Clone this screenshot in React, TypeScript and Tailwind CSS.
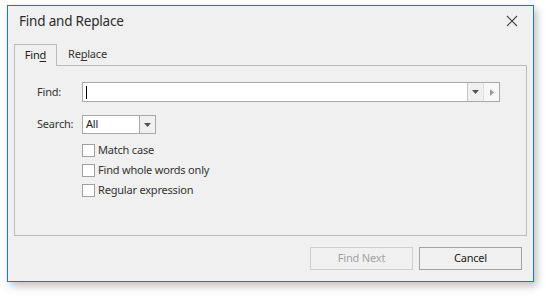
import React from "react";

const font = { fontFamily: '"Segoe UI", "Noto Sans", "Liberation Sans", sans-serif' };

function CheckRow({ label }: { label: string }) {
  return (
    <div className="flex items-center h-[20px]">
      <div className="w-[13px] h-[13px] border border-[#a0a0a0] bg-white mr-[3px]"></div>
      <span className="text-[11px] tracking-[-0.2px] text-[#333]">{label}</span>
    </div>
  );
}

export default function App() {
  return (
    <div className="w-[546px] h-[297px] bg-white pl-[7px] pt-[5px]" style={font}>
      <div className="w-[527px] h-[277px] border border-[#1a78cc] bg-[#f0f0f0] shadow-[3px_4px_8px_rgba(0,0,0,0.25)] flex flex-col">
        {/* title bar */}
        <div className="h-[29px] flex items-center justify-between pl-[11px] pr-[15px]">
          <span className="text-[13.5px] tracking-[-0.2px] text-[#2b2b2b] mt-[1px]">Find and Replace</span>
          <svg width="12" height="12" viewBox="0 0 12 12" className="mt-[1px]">
            <path d="M1 1L11 11M11 1L1 11" stroke="#444" strokeWidth="1.1" />
          </svg>
        </div>

        {/* tabs */}
        <div className="mt-[9px] mx-[6px] flex flex-col">
          <div className="flex h-[21px]">
            <div className="w-[43px] h-[22px] border border-b-0 border-[#bcbcbc] bg-[#f0f0f0] flex items-center justify-center text-[11px] tracking-[-0.2px] text-[#222] relative z-10">
              <span>
                Fin<span className="underline underline-offset-2">d</span>
              </span>
            </div>
            <div className="flex items-center pl-[11px] text-[11px] tracking-[-0.2px] text-[#333]">
              <span>
                Re<span className="underline underline-offset-2">p</span>lace
              </span>
            </div>
          </div>
          <div className="h-[171px] border border-[#bcbcbc] pt-[16px] pl-[22px] pr-[26px]">
            <div className="flex items-center">
              <span className="w-[45px] text-[11px] tracking-[-0.2px] text-[#333]">Find:</span>
              <div className="flex-1 h-[20px] border border-[#a8a8a8] bg-white flex">
                <div className="flex-1 flex items-center pl-[3px]">
                  <div className="w-[1px] h-[13px] bg-black"></div>
                </div>
                <div className="w-[16px] border-l border-[#c8c8c8] bg-[#f0f0f0] flex items-center justify-center">
                  <svg width="7" height="4" viewBox="0 0 7 4">
                    <path d="M0 0H7L3.5 4Z" fill="#555" />
                  </svg>
                </div>
                <div className="w-[16px] border-l border-[#e0e0e0] bg-[#f7f7f7] flex items-center justify-center">
                  <svg width="4" height="7" viewBox="0 0 4 7">
                    <path d="M0 0V7L4 3.5Z" fill="#999" />
                  </svg>
                </div>
              </div>
            </div>

            <div className="flex items-center mt-[13px]">
              <span className="w-[45px] text-[11px] tracking-[-0.2px] text-[#333]">Search:</span>
              <div className="w-[74px] h-[19px] border border-[#a8a8a8] bg-white flex">
                <div className="flex-1 flex items-center pl-[3px] text-[11px] tracking-[-0.2px] text-[#222]">All</div>
                <div className="w-[16px] border-l border-[#a8a8a8] bg-[#f0f0f0] flex items-center justify-center">
                  <svg width="7" height="4" viewBox="0 0 7 4">
                    <path d="M0 0H7L3.5 4Z" fill="#555" />
                  </svg>
                </div>
              </div>
            </div>

            <div className="ml-[45px] mt-[6px] flex flex-col">
              <CheckRow label="Match case" />
              <CheckRow label="Find whole words only" />
              <CheckRow label="Regular expression" />
            </div>
          </div>
        </div>

        {/* buttons */}
        <div className="flex justify-end gap-[6px] pr-[11px] mt-[11px]">
          <div className="w-[103px] h-[23px] border border-[#cfcfcf] flex items-center justify-center text-[11px] tracking-[-0.2px] text-[#a3a3a3]">
            Find Next
          </div>
          <div className="w-[103px] h-[23px] border border-[#a3a3a3] flex items-center justify-center text-[11px] tracking-[-0.2px] text-[#222]">
            Cancel
          </div>
        </div>
      </div>
    </div>
  );
}
